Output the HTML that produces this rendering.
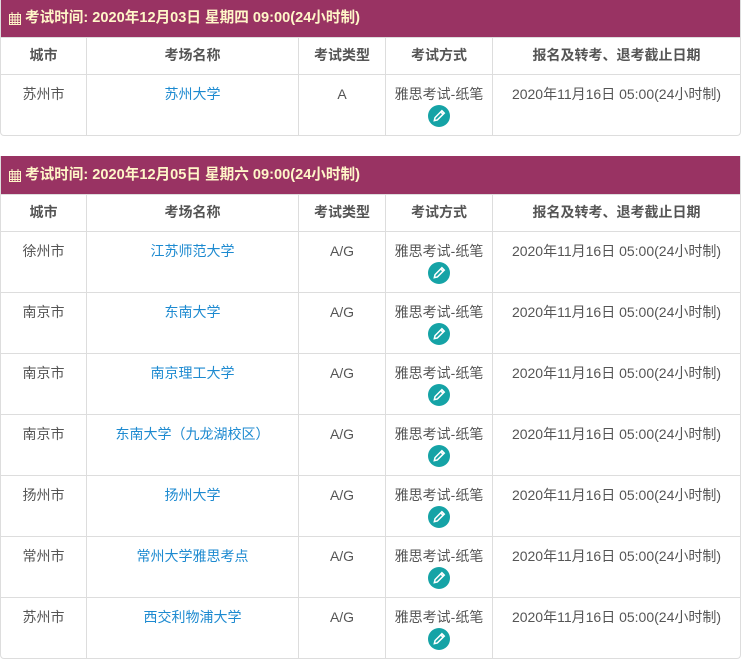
<!DOCTYPE html>
<html><head><meta charset="utf-8"><style>
body{margin:0;background:#fff;font-family:"Liberation Sans","Noto Sans CJK SC",sans-serif;font-size:14px;color:#555;width:741px;height:660px;overflow:hidden;position:relative}
.box{position:absolute;left:0;width:739px;border:1px solid #ddd;border-top:none;border-radius:0 0 4px 4px;overflow:hidden}
.title{height:37px;background:#993363;color:#fff6c8;font-weight:bold;font-size:14.6px;line-height:37px;padding-left:8px;display:flex;align-items:center}
.title svg{margin-right:4px}
.row{display:flex;border-top:1px solid #ddd;box-sizing:border-box}
.row>div{border-right:1px solid #ddd;text-align:center;box-sizing:border-box}
.row>div:last-child{border-right:none}
.c1{width:86px}.c2{width:212px}.c3{width:87px}.c4{width:107px}.c5{width:247px}
.h{height:37px;line-height:35px;font-weight:bold}
.r{height:61px;line-height:20px}
.r>div{padding-top:9px}
a{color:#1d8ad0;text-decoration:none}
.ic{display:inline-block;width:22px;height:22px;border-radius:50%;background:#15a3a6;margin-top:1px;vertical-align:top}
.ic svg{display:block;margin:4px auto 0}
</style></head><body>

<div class="box" style="top:0">
<div class="title"><svg width="12" height="13" viewBox="0 0 12 13"><rect x="0.5" y="2.5" width="11" height="10" fill="none" stroke="#fff6c8"/><path d="M0 5h12M0 8h12M0 10.5h12M3.3 2v11M6 2v11M8.7 2v11M3 0v3M9 0v3" stroke="#fff6c8" stroke-width="1"/></svg>考试时间: 2020年12月03日 星期四 09:00(24小时制)</div>
<div class="row h"><div class="c1">城市</div><div class="c2">考场名称</div><div class="c3">考试类型</div><div class="c4">考试方式</div><div class="c5">报名及转考、退考截止日期</div></div>
<div class="row r"><div class="c1">苏州市</div><div class="c2"><a>苏州大学</a></div><div class="c3">A</div><div class="c4">雅思考试-纸笔<br><span class="ic"><svg width="14" height="14" viewBox="0 0 12 12"><path d="M2 10l.6-2.6L8.5 1.5l2 2L4.6 9.4z M7.5 2.5l2 2" fill="none" stroke="#fff" stroke-width="1.3"/></svg></span></div><div class="c5">2020年11月16日 05:00(24小时制)</div></div>
</div>

<div class="box" style="top:156px">
<div class="title" style="height:38px"><svg width="12" height="13" viewBox="0 0 12 13"><rect x="0.5" y="2.5" width="11" height="10" fill="none" stroke="#fff6c8"/><path d="M0 5h12M0 8h12M0 10.5h12M3.3 2v11M6 2v11M8.7 2v11M3 0v3M9 0v3" stroke="#fff6c8" stroke-width="1"/></svg>考试时间: 2020年12月05日 星期六 09:00(24小时制)</div>
<div class="row h"><div class="c1">城市</div><div class="c2">考场名称</div><div class="c3">考试类型</div><div class="c4">考试方式</div><div class="c5">报名及转考、退考截止日期</div></div>
<div class="row r"><div class="c1">徐州市</div><div class="c2"><a>江苏师范大学</a></div><div class="c3">A/G</div><div class="c4">雅思考试-纸笔<br><span class="ic"><svg width="14" height="14" viewBox="0 0 12 12"><path d="M2 10l.6-2.6L8.5 1.5l2 2L4.6 9.4z M7.5 2.5l2 2" fill="none" stroke="#fff" stroke-width="1.3"/></svg></span></div><div class="c5">2020年11月16日 05:00(24小时制)</div></div>
<div class="row r"><div class="c1">南京市</div><div class="c2"><a>东南大学</a></div><div class="c3">A/G</div><div class="c4">雅思考试-纸笔<br><span class="ic"><svg width="14" height="14" viewBox="0 0 12 12"><path d="M2 10l.6-2.6L8.5 1.5l2 2L4.6 9.4z M7.5 2.5l2 2" fill="none" stroke="#fff" stroke-width="1.3"/></svg></span></div><div class="c5">2020年11月16日 05:00(24小时制)</div></div>
<div class="row r"><div class="c1">南京市</div><div class="c2"><a>南京理工大学</a></div><div class="c3">A/G</div><div class="c4">雅思考试-纸笔<br><span class="ic"><svg width="14" height="14" viewBox="0 0 12 12"><path d="M2 10l.6-2.6L8.5 1.5l2 2L4.6 9.4z M7.5 2.5l2 2" fill="none" stroke="#fff" stroke-width="1.3"/></svg></span></div><div class="c5">2020年11月16日 05:00(24小时制)</div></div>
<div class="row r"><div class="c1">南京市</div><div class="c2"><a>东南大学（九龙湖校区）</a></div><div class="c3">A/G</div><div class="c4">雅思考试-纸笔<br><span class="ic"><svg width="14" height="14" viewBox="0 0 12 12"><path d="M2 10l.6-2.6L8.5 1.5l2 2L4.6 9.4z M7.5 2.5l2 2" fill="none" stroke="#fff" stroke-width="1.3"/></svg></span></div><div class="c5">2020年11月16日 05:00(24小时制)</div></div>
<div class="row r"><div class="c1">扬州市</div><div class="c2"><a>扬州大学</a></div><div class="c3">A/G</div><div class="c4">雅思考试-纸笔<br><span class="ic"><svg width="14" height="14" viewBox="0 0 12 12"><path d="M2 10l.6-2.6L8.5 1.5l2 2L4.6 9.4z M7.5 2.5l2 2" fill="none" stroke="#fff" stroke-width="1.3"/></svg></span></div><div class="c5">2020年11月16日 05:00(24小时制)</div></div>
<div class="row r"><div class="c1">常州市</div><div class="c2"><a>常州大学雅思考点</a></div><div class="c3">A/G</div><div class="c4">雅思考试-纸笔<br><span class="ic"><svg width="14" height="14" viewBox="0 0 12 12"><path d="M2 10l.6-2.6L8.5 1.5l2 2L4.6 9.4z M7.5 2.5l2 2" fill="none" stroke="#fff" stroke-width="1.3"/></svg></span></div><div class="c5">2020年11月16日 05:00(24小时制)</div></div>
<div class="row r"><div class="c1">苏州市</div><div class="c2"><a>西交利物浦大学</a></div><div class="c3">A/G</div><div class="c4">雅思考试-纸笔<br><span class="ic"><svg width="14" height="14" viewBox="0 0 12 12"><path d="M2 10l.6-2.6L8.5 1.5l2 2L4.6 9.4z M7.5 2.5l2 2" fill="none" stroke="#fff" stroke-width="1.3"/></svg></span></div><div class="c5">2020年11月16日 05:00(24小时制)</div></div>
</div>
</body></html>
